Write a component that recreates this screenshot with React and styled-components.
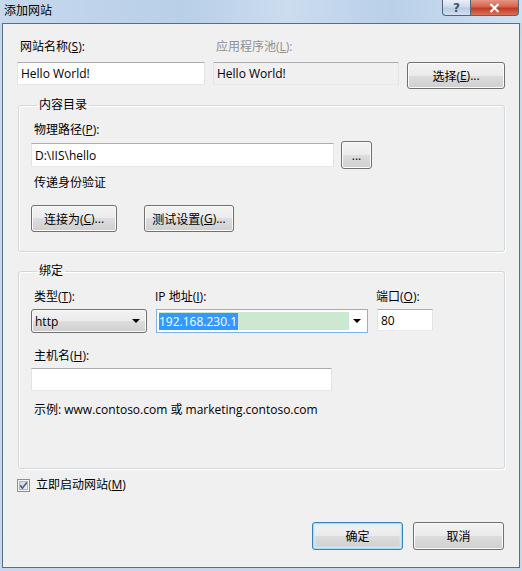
import React from "react";
import styled, { createGlobalStyle } from "styled-components";

const GlobalStyle = createGlobalStyle`
  html, body {
    margin: 0;
    padding: 0;
  }
  body {
    font-family: "Open Sans", "Noto Sans CJK SC", sans-serif;
    font-size: 12px;
    color: #000;
  }
`;

const Window = styled.div`
  width: 522px;
  height: 571px;
  display: flex;
  flex-direction: column;
  background: linear-gradient(180deg, #bdd3ea 0%, #c8daee 60px, #c6d9ec 100%);
  overflow: hidden;
`;

const TitleBar = styled.div`
  height: 23px;
  flex-shrink: 0;
  display: flex;
  align-items: flex-start;
  padding-left: 4px;
  background: linear-gradient(
    90deg,
    #c6d9ed 0%,
    #b8cfe8 35%,
    #cbdcef 55%,
    #b9d0e9 75%,
    #cfe0f1 100%
  );
`;

const TitleText = styled.span`
  line-height: 22px;
  color: #000;
`;

const CaptionButtons = styled.div`
  margin-left: auto;
  margin-right: 3px;
  display: flex;
`;

const CaptionButton = styled.div`
  height: 15px;
  width: ${(p) => p.$width}px;
  display: flex;
  align-items: center;
  justify-content: center;
  border: 1px solid #51657c;
  border-top: none;
  border-left: ${(p) => (p.$close ? "none" : "1px solid #51657c")};
  border-radius: ${(p) => (p.$close ? "0 0 4px 0" : "0 0 0 4px")};
  background: ${(p) =>
    p.$close
      ? "linear-gradient(180deg, #e59484 0%, #d3654f 45%, #c23a22 55%, #d6735b 100%)"
      : "linear-gradient(180deg, #e8eff7 0%, #cddbeb 45%, #b9cce3 55%, #cfdff0 100%)"};
  color: #3f5470;
  font: bold 12px "DejaVu Sans", sans-serif;
  box-sizing: content-box;
`;

const Client = styled.div`
  flex: 1;
  margin: 0 2px 3px 2px;
  border: 1px solid #5b6d80;
  background: #f0f0f0;
  padding: 15px 14px 0 14px;
  display: flex;
  flex-direction: column;
`;

const TopRow = styled.div`
  display: grid;
  grid-template-columns: 188px 186px 98px;
  column-gap: 8px;
  row-gap: 7px;
  align-items: start;
`;

const Label = styled.div`
  line-height: 16px;
  white-space: nowrap;
  margin-left: ${(p) => p.$indent ?? 3}px;
  margin-top: ${(p) => p.$top ?? 0}px;
  color: ${(p) => (p.$disabled ? "#8f8f8f" : "#000")};
`;

const TextBox = styled.div`
  box-sizing: border-box;
  width: ${(p) => p.$width}px;
  height: ${(p) => p.$height ?? 23}px;
  padding-left: 3px;
  display: flex;
  align-items: center;
  border: 1px solid;
  border-color: #abadb3 #e2e3ea #e3e9ef #e2e3ea;
  background: ${(p) => (p.$disabled ? "#f0f0f0" : "#fff")};
  white-space: nowrap;
`;

const Button = styled.div`
  box-sizing: border-box;
  width: ${(p) => p.$width}px;
  height: ${(p) => p.$height ?? 27}px;
  display: flex;
  align-items: center;
  justify-content: center;
  border: 1px solid ${(p) => (p.$default ? "#3c7fb1" : "#707070")};
  border-radius: 3px;
  background: linear-gradient(
    180deg,
    #f2f2f2 0%,
    #ebebeb 50%,
    #dddddd 50%,
    #cfcfcf 100%
  );
  box-shadow: ${(p) =>
    p.$default
      ? "inset 0 0 0 1px #a6dcf4, inset 0 0 2px 2px #d4eefa"
      : "inset 0 0 0 1px #fbfbfb"};
  white-space: nowrap;
`;

const Group = styled.fieldset`
  margin: ${(p) => p.$top}px 0 0 1px;
  padding: ${(p) => p.$padTop}px 0 ${(p) => p.$padBottom}px 12px;
  border: 1px solid #d0d9df;
  border-radius: 3px;
  box-shadow: inset 1px 1px 0 #fff, 1px 1px 0 #fff;
  min-width: 0;
`;

const Legend = styled.legend`
  margin-left: 6px;
  padding: 0 2px;
  line-height: 16px;
`;

const Row = styled.div`
  display: flex;
  align-items: ${(p) => p.$align ?? "center"};
  gap: ${(p) => p.$gap ?? 0}px;
  margin-top: ${(p) => p.$top ?? 0}px;
`;

const BindGrid = styled.div`
  display: grid;
  grid-template-columns: 116px 212px 56px;
  column-gap: 9px;
  row-gap: 4px;
  align-items: start;
`;

const SelectBox = styled.div`
  box-sizing: border-box;
  width: 116px;
  height: 24px;
  display: flex;
  align-items: center;
  padding: 0 6px 0 3px;
  border: 1px solid #707070;
  border-radius: 3px;
  background: linear-gradient(
    180deg,
    #f2f2f2 0%,
    #ebebeb 50%,
    #dddddd 50%,
    #cfcfcf 100%
  );
  box-shadow: inset 0 0 0 1px #fbfbfb;
`;

const ComboBox = styled.div`
  box-sizing: border-box;
  width: 212px;
  height: 24px;
  display: flex;
  align-items: center;
  padding: 2px 6px 2px 2px;
  border: 1px solid #7eb4ea;
  background: #fff;
`;

const ComboField = styled.div`
  width: 190px;
  height: 100%;
  display: flex;
  align-items: center;
  background: #cde8d0;
`;

const Selected = styled.span`
  background: #3399ff;
  color: #fff;
  line-height: 17px;
  padding-right: 1px;
`;

const Arrow = styled.span`
  margin-left: auto;
  width: 0;
  height: 0;
  border-left: 4px solid transparent;
  border-right: 4px solid transparent;
  border-top: 4px solid #000;
`;

const CheckRow = styled.label`
  display: flex;
  align-items: center;
  gap: 6px;
  margin-top: 8px;
  line-height: 16px;
`;

const Footer = styled.div`
  display: flex;
  justify-content: flex-end;
  gap: 10px;
  margin-top: 29px;
  padding-right: 1px;
`;

const Check = () => (
  <svg width="13" height="13" viewBox="0 0 13 13">
    <defs>
      <linearGradient id="cb" x1="0" y1="0" x2="1" y2="1">
        <stop offset="0" stopColor="#cbcfd5" />
        <stop offset="1" stopColor="#f6f6f6" />
      </linearGradient>
    </defs>
    <rect x="0.5" y="0.5" width="12" height="12" fill="#f4f4f4" stroke="#8e8f8f" />
    <rect x="2.5" y="2.5" width="8" height="8" fill="url(#cb)" stroke="#b5b8bd" />
    <path d="M3.2 6.2 L5.4 9.2 L9.8 3.4" fill="none" stroke="#4a5f97" strokeWidth="1.7" />
  </svg>
);

const CloseX = () => (
  <svg width="11" height="10" viewBox="0 0 11 10">
    <path d="M1.5 1 L9.5 9 M9.5 1 L1.5 9" stroke="#fff" strokeWidth="2.2" />
  </svg>
);

export default function App() {
  return (
    <>
      <GlobalStyle />
      <Window>
        <TitleBar>
          <TitleText>添加网站</TitleText>
          <CaptionButtons>
            <CaptionButton $width={27}>?</CaptionButton>
            <CaptionButton $width={47} $close>
              <CloseX />
            </CaptionButton>
          </CaptionButtons>
        </TitleBar>

        <Client>
          <TopRow>
            <Label>
              网站名称(<u>S</u>):
            </Label>
            <Label $disabled>
              应用程序池(<u>L</u>):
            </Label>
            <div />
            <TextBox $width={188}>Hello World!</TextBox>
            <TextBox $width={186} $disabled>
              Hello World!
            </TextBox>
            <Button $width={98}>
              选择(<u>E</u>)...
            </Button>
          </TopRow>

          <Group $top={8} $padTop={9} $padBottom={19}>
            <Legend>内容目录</Legend>
            <Label>
              物理路径(<u>P</u>):
            </Label>
            <Row $gap={7} $top={3}>
              <TextBox $width={303} $height={24}>
                D:\IIS\hello
              </TextBox>
              <Button $width={31} $height={28}>
                ...
              </Button>
            </Row>
            <Label $top={6}>传递身份验证</Label>
            <Row $gap={27} $top={14}>
              <Button $width={86}>
                连接为(<u>C</u>)...
              </Button>
              <Button $width={90}>
                测试设置(<u>G</u>)...
              </Button>
            </Row>
          </Group>

          <Group $top={11} $padTop={10} $padBottom={50}>
            <Legend>绑定</Legend>
            <BindGrid>
              <Label>
                类型(<u>T</u>):
              </Label>
              <Label $indent={-1}>
                IP 地址(<u>I</u>):
              </Label>
              <Label $indent={-1}>
                端口(<u>O</u>):
              </Label>
              <SelectBox>
                http
                <Arrow />
              </SelectBox>
              <ComboBox>
                <ComboField>
                  <Selected>192.168.230.1</Selected>
                </ComboField>
                <Arrow />
              </ComboBox>
              <TextBox $width={56} $height={22}>
                80
              </TextBox>
            </BindGrid>
            <Label $top={15}>
              主机名(<u>H</u>):
            </Label>
            <Row $top={4}>
              <TextBox $width={301} $height={23} />
            </Row>
            <Label $top={11}>示例: www.contoso.com 或 marketing.contoso.com</Label>
          </Group>

          <CheckRow>
            <Check />
            <span>
              立即启动网站(<u>M</u>)
            </span>
          </CheckRow>

          <Footer>
            <Button $width={91} $height={28} $default>
              确定
            </Button>
            <Button $width={91} $height={28}>
              取消
            </Button>
          </Footer>
        </Client>
      </Window>
    </>
  );
}
